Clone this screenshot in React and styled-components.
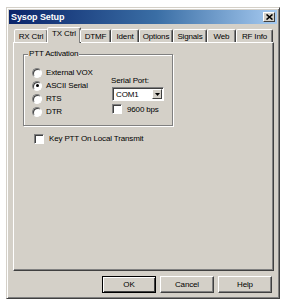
import React from 'react';
import styled, { createGlobalStyle } from 'styled-components';

const GlobalStyle = createGlobalStyle`
  html, body {
    margin: 0;
    padding: 0;
    background: #ffffff;
  }
  body {
    font-family: "Liberation Sans", Arial, sans-serif;
    font-size: 8px;
    letter-spacing: -0.15px;
    color: #000;
  }
`;

const Page = styled.div`
  padding: 7px 6px 0 6px;
`;

const Window = styled.div`
  box-sizing: border-box;
  width: 274px;
  height: 292px;
  background: #d4d0c8;
  border: 1px solid;
  border-color: #d4d0c8 #404040 #404040 #d4d0c8;
  box-shadow: inset 1px 1px 0 #ffffff, inset -1px -1px 0 #808080;
  padding: 2px;
  display: flex;
  flex-direction: column;
`;

const TitleBar = styled.div`
  height: 14px;
  background: linear-gradient(to right, #0a246a 0%, #3a6ea5 55%, #a6caf0 100%);
  display: flex;
  align-items: center;
  justify-content: space-between;
  padding: 0 2px 0 2px;
`;

const Title = styled.div`
  color: #ffffff;
  font-weight: bold;
  font-size: 9px;
  letter-spacing: -0.1px;
`;

const CloseButton = styled.div`
  box-sizing: border-box;
  width: 12px;
  height: 10px;
  background: #d4d0c8;
  border: 1px solid;
  border-color: #ffffff #404040 #404040 #ffffff;
  display: flex;
  align-items: center;
  justify-content: center;
`;

const Body = styled.div`
  flex: 1;
  display: flex;
  flex-direction: column;
  padding: 3px 3px 0 4px;
`;

const TabStrip = styled.div`
  display: flex;
  align-items: flex-end;
  height: 15px;
  padding-left: 1px;
  position: relative;
  z-index: 1;
`;

const Tab = styled.div`
  box-sizing: border-box;
  width: ${({ $w }) => $w}px;
  height: ${({ $active }) => ($active ? 16 : 13)}px;
  margin-bottom: ${({ $active }) => ($active ? -1 : 0)}px;
  margin-left: ${({ $active }) => ($active ? -1 : 0)}px;
  margin-right: ${({ $active }) => ($active ? -1 : 0)}px;
  background: #d4d0c8;
  border: 1px solid;
  border-bottom: none;
  border-color: #ffffff #404040 transparent #ffffff;
  box-shadow: inset -1px 0 0 #808080;
  border-radius: 2px 2px 0 0;
  display: flex;
  align-items: ${({ $active }) => ($active ? 'flex-start' : 'center')};
  padding-top: ${({ $active }) => ($active ? 1 : 0)}px;
  justify-content: center;
  white-space: nowrap;
`;

const Panel = styled.div`
  box-sizing: border-box;
  height: 229px;
  border: 1px solid;
  border-color: #ffffff #404040 #404040 #ffffff;
  box-shadow: inset -1px -1px 0 #808080;
  padding: 11px 0 0 9px;
  display: flex;
  flex-direction: column;
  gap: 6px;
`;

const GroupBox = styled.div`
  box-sizing: border-box;
  position: relative;
  width: 150px;
  height: 72px;
  border: 1px solid #808080;
  box-shadow: 1px 1px 0 #ffffff, inset 1px 1px 0 #ffffff;
  padding: 11px 0 0 8px;
  display: flex;
`;

const Legend = styled.div`
  position: absolute;
  top: -6px;
  left: 4px;
  padding: 0 1px;
  background: #d4d0c8;
  line-height: 10px;
`;

const RadioColumn = styled.div`
  width: 79px;
  display: flex;
  flex-direction: column;
`;

const OptionRow = styled.label`
  display: flex;
  align-items: center;
  gap: ${({ $gap }) => $gap || 4}px;
  height: ${({ $h }) => $h || 13}px;
  white-space: nowrap;
`;

const Radio = styled.span`
  box-sizing: border-box;
  width: 10px;
  height: 10px;
  border-radius: 50%;
  background: #ffffff;
  border: 1px solid;
  border-color: #808080 #ffffff #ffffff #808080;
  box-shadow: inset 1px 1px 0 #404040;
  display: flex;
  align-items: center;
  justify-content: center;
  &::after {
    content: '';
    width: 3px;
    height: 3px;
    border-radius: 50%;
    background: ${({ $checked }) => ($checked ? '#000' : 'transparent')};
  }
`;

const Check = styled.span`
  box-sizing: border-box;
  width: 10px;
  height: 10px;
  background: #ffffff;
  border: 1px solid;
  border-color: #808080 #ffffff #ffffff #808080;
  box-shadow: inset 1px 1px 0 #404040;
`;

const SerialColumn = styled.div`
  display: flex;
  flex-direction: column;
  padding-top: 10px;
`;

const FieldLabel = styled.div`
  height: 10px;
  line-height: 10px;
  margin-bottom: 1px;
`;

const Combo = styled.div`
  box-sizing: border-box;
  width: 52px;
  height: 14px;
  margin-left: 1px;
  background: #ffffff;
  border: 1px solid;
  border-color: #808080 #ffffff #ffffff #808080;
  box-shadow: inset 1px 1px 0 #404040;
  display: flex;
  align-items: center;
  justify-content: space-between;
  padding: 1px 1px 1px 3px;
  margin-bottom: 3px;
`;

const DropButton = styled.span`
  box-sizing: border-box;
  width: 10px;
  height: 10px;
  background: #d4d0c8;
  border: 1px solid;
  border-color: #ffffff #404040 #404040 #ffffff;
  display: flex;
  align-items: center;
  justify-content: center;
`;

const SpeedRow = styled.div`
  padding-left: 1px;
`;

const KeyRow = styled.div`
  padding-left: 11px;
`;

const ButtonRow = styled.div`
  display: flex;
  justify-content: flex-end;
  gap: 4px;
  padding: 5px 2px 0 0;
`;

const Button = styled.div`
  box-sizing: border-box;
  width: 54px;
  height: 17px;
  background: #d4d0c8;
  border: 1px solid;
  border-color: ${({ $default }) => ($default ? '#000' : '#ffffff #404040 #404040 #ffffff')};
  box-shadow: ${({ $default }) =>
    $default ? 'inset 1px 1px 0 #ffffff, inset -1px -1px 0 #404040' : 'inset -1px -1px 0 #808080'};
  display: flex;
  align-items: center;
  justify-content: center;
`;

const tabs = [
  { label: 'RX Ctrl', w: 34 },
  { label: 'TX Ctrl', w: 34, active: true },
  { label: 'DTMF', w: 31 },
  { label: 'Ident', w: 28 },
  { label: 'Options', w: 34 },
  { label: 'Signals', w: 34 },
  { label: 'Web', w: 29 },
  { label: 'RF Info', w: 37 },
];

const radios = [
  { label: 'External VOX' },
  { label: 'ASCII Serial', checked: true },
  { label: 'RTS' },
  { label: 'DTR' },
];

const App = () => {
  return (
    <Page>
      <GlobalStyle />
      <Window>
        <TitleBar>
          <Title>Sysop Setup</Title>
          <CloseButton>
            <svg width="7" height="6" viewBox="0 0 7 6">
              <path d="M0.5 0.5 L6.5 5.5 M6.5 0.5 L0.5 5.5" stroke="#000" strokeWidth="1.6" />
            </svg>
          </CloseButton>
        </TitleBar>
        <Body>
          <TabStrip>
            {tabs.map((t) => (
              <Tab key={t.label} $w={t.w} $active={t.active}>
                {t.label}
              </Tab>
            ))}
          </TabStrip>
          <Panel>
            <GroupBox>
              <Legend>PTT Activation</Legend>
              <RadioColumn>
                {radios.map((r) => (
                  <OptionRow key={r.label}>
                    <Radio $checked={r.checked} />
                    {r.label}
                  </OptionRow>
                ))}
              </RadioColumn>
              <SerialColumn>
                <FieldLabel>Serial Port:</FieldLabel>
                <Combo>
                  COM1
                  <DropButton>
                    <svg width="5" height="3" viewBox="0 0 5 3">
                      <path d="M0 0 H5 L2.5 3 Z" fill="#000" />
                    </svg>
                  </DropButton>
                </Combo>
                <SpeedRow>
                  <OptionRow $h={10} $gap={5}>
                    <Check />
                    9600 bps
                  </OptionRow>
                </SpeedRow>
              </SerialColumn>
            </GroupBox>
            <KeyRow>
              <OptionRow $gap={5}>
                <Check />
                Key PTT On Local Transmit
              </OptionRow>
            </KeyRow>
          </Panel>
          <ButtonRow>
            <Button $default>OK</Button>
            <Button>Cancel</Button>
            <Button>Help</Button>
          </ButtonRow>
        </Body>
      </Window>
    </Page>
  );
};

export default App;
